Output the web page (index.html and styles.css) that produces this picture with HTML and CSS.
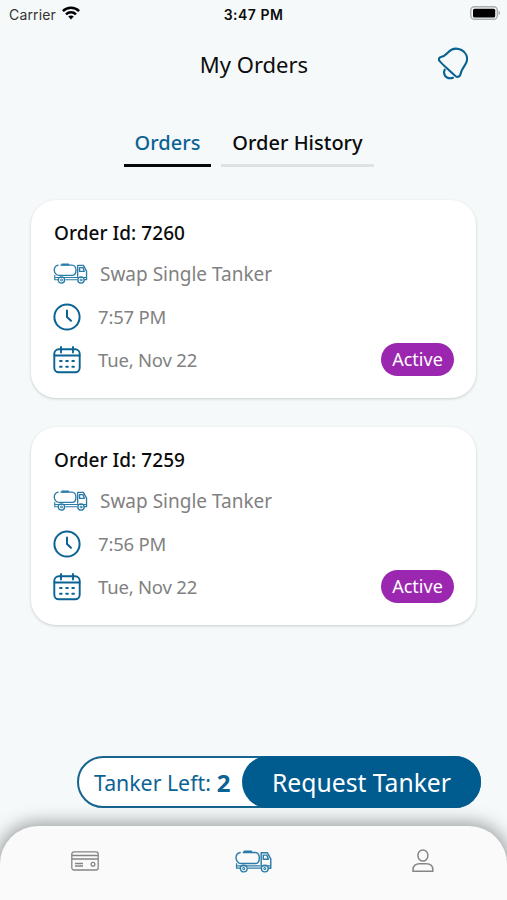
FILE: index.html
```html
<!DOCTYPE html>
<html lang="en">
<head>
<meta charset="utf-8">
<title>My Orders</title>
<link rel="stylesheet" href="styles.css">
</head>
<body>
<svg class="defs" width="0" height="0">
  <symbol id="truck" viewBox="0 0 36 22">
    <g fill="none" stroke="currentColor" stroke-width="1.4" stroke-linecap="round" stroke-linejoin="round">
      <path d="M5 2.300C2.200 3 1 4.800 1 7.300S2.800 13 6 13H19.500C22.300 13 23.700 10.500 23.700 7.500S22.500 2.300 19.500 2.300H8"/>
      <path d="M9 1H16V2H9Z" stroke-width="1.200"/>
      <path d="M25.500 14V2.500H31.500L34.800 8.500V17.500H32.500M27.500 4.800H31L32.500 8.800H27.500Z"/>
      <path d="M1.500 13V17.500H5M13 17.500H25M1.500 15.200H34.500" stroke-width="1.200"/>
      <circle cx="8.500" cy="17.800" r="3.300"/><circle cx="8.500" cy="17.800" r="1" stroke-width="1"/>
      <circle cx="29" cy="17.800" r="3.300"/><circle cx="29" cy="17.800" r="1" stroke-width="1"/>
    </g>
  </symbol>
  <symbol id="clock" viewBox="0 0 28 28">
    <g fill="none" stroke="currentColor" stroke-width="2" stroke-linecap="round" stroke-linejoin="round">
      <circle cx="14" cy="14" r="12.600"/><path d="M14 7.500V14L18 17.800"/>
    </g>
  </symbol>
  <symbol id="calendar" viewBox="0 0 28 28">
    <g fill="none" stroke="currentColor" stroke-width="1.900" stroke-linecap="round">
      <rect x="1.300" y="3.300" width="25.400" height="23" rx="4.500"/>
      <path d="M1.500 9.500H26.500M8 1V6.500M20 1V6.500"/>
      <path d="M7 15H8.700M13.200 15H14.900M19.300 15H21M7 20.800H8.700M13.200 20.800H14.900M19.300 20.800H21"/>
    </g>
  </symbol>
</svg>

<div class="status">
  <div class="carrier"><span>Carrier</span>
    <svg width="18" height="14" viewBox="0 0 18 14"><g fill="none" stroke="#000" stroke-width="2.500"><path d="M.9 5.200C5.400 .7 12.600 .7 17.100 5.200"/><path d="M4 8.300C6.800 5.600 11.200 5.600 14 8.300"/></g><path d="M6.200 10.500C7.800 9 10.200 9 11.800 10.500L9 13.400Z"/></svg>
  </div>
  <div class="time">3:47 PM</div>
  <svg class="battery" width="31" height="14" viewBox="0 0 31 14"><rect x=".8" y=".8" width="26.500" height="12.400" rx="3.500" fill="none" stroke="#aaadae" stroke-width="1.400"/><rect x="3" y="2.700" width="22.200" height="8.800" rx="1.500"/><path d="M28.500 4.800C30.500 5.500 30.500 8.500 28.500 9.200Z" fill="#aaadae"/></svg>
</div>

<header class="header">
  <h1>My Orders</h1>
  <svg class="bell" width="32" height="34" viewBox="0 0 32 34"><g fill="none" stroke="#066290" stroke-width="2.100" stroke-linecap="round" stroke-linejoin="round"><path d="M1.600 14C.2 12.300 .8 10.600 3 10C6.500 9.400 8 7.600 10.200 5.300C13.500 1.800 18.500 .6 23.500 3C28.200 5.500 30 10.300 28.500 15.200C27.300 18.500 23.800 21.500 22.700 26.500C22.200 29.600 20 30.500 17.800 29.300C16.500 28.500 3 16 1.600 14Z"/><path d="M6.700 22.700C5.300 25.500 6.300 29 9 30.500C11 31.600 13 31.500 15 30.800"/></g></svg>
</header>

<nav class="tabs">
  <div class="tab on"><span>Orders</span></div>
  <div class="tab"><span>Order History</span></div>
</nav>

<main class="list">
  <section class="card">
    <h2>Order Id: 7260</h2>
    <div class="row kind"><svg width="35" height="21"><use href="#truck"/></svg><span>Swap Single Tanker</span></div>
    <div class="row"><svg width="28" height="28"><use href="#clock"/></svg><span>7:57 PM</span></div>
    <div class="row"><svg width="28" height="28"><use href="#calendar"/></svg><span>Tue, Nov 22</span><b class="badge">Active</b></div>
  </section>
  <section class="card">
    <h2>Order Id: 7259</h2>
    <div class="row kind"><svg width="35" height="21"><use href="#truck"/></svg><span>Swap Single Tanker</span></div>
    <div class="row"><svg width="28" height="28"><use href="#clock"/></svg><span>7:56 PM</span></div>
    <div class="row"><svg width="28" height="28"><use href="#calendar"/></svg><span>Tue, Nov 22</span><b class="badge">Active</b></div>
  </section>
</main>

<div class="request">
  <div class="left"><span>Tanker Left:</span><b>2</b></div>
  <div class="button"><span>Request Tanker</span></div>
</div>

<footer class="bar">
  <div class="item"><svg width="28" height="20" viewBox="0 0 28 20"><g fill="none" stroke="#858585" stroke-width="1.300"><rect x=".8" y=".8" width="26.400" height="18.200" rx="2.200"/><path d="M1 4.500H27M1 8H27M4 12.500H12M4 15H12"/><circle cx="22" cy="13.300" r="1.900"/></g></svg></div>
  <div class="item truck"><svg width="37" height="23"><use href="#truck"/></svg></div>
  <div class="item"><svg width="22" height="24" viewBox="0 0 22 24"><g fill="none" stroke="#858585" stroke-width="1.500"><ellipse cx="10.900" cy="6.500" rx="5" ry="5.600"/><path d="M1 22.200V20.500C1 16.500 4 14.700 7.500 14.700H14.200C17.800 14.700 20.800 16.500 20.800 20.500V22.200Z"/></g></svg></div>
</footer>
</body>
</html>
```
FILE: styles.css
```css
* { box-sizing: border-box; }
body {
  margin: 0;
  height: 900px;
  display: flex;
  flex-direction: column;
  overflow: hidden;
  background: #f5f9fa;
  color: #0c0c0c;
  font-family: "Noto Sans", "Open Sans", sans-serif;
  white-space: nowrap;
}
svg { display: block; flex: none; }
.defs { position: absolute; }
.status {
  height: 28px;
  padding: 0 6px 0 9px;
  display: grid;
  grid-template-columns: 1fr auto 1fr;
  align-items: center;
  font-family: Inter, sans-serif;
  font-size: 14px;
}
.carrier { display: flex; gap: 6px; align-items: center; color: #333; }
.carrier span { letter-spacing: .15px; }
.carrier svg { margin-top: -2px; }
.time { font-weight: 600; letter-spacing: .5px; margin-right: 3px; }
.battery { justify-self: end; margin-top: -2px; }
.header {
  height: 71px;
  padding: 0 37px 0 70px;
  display: grid;
  grid-template-columns: 1fr 32px;
  align-items: center;
}
h1 { margin: 0; text-align: center; font-size: 22px; font-weight: 400; }
.tabs { display: flex; gap: 10px; margin: 20px 0 0 124px; height: 48px; }
.tab {
  width: 87px;
  height: 48px;
  padding-top: 2px;
  display: flex;
  justify-content: center;
  align-items: center;
  border-bottom: 3px solid #dee2e4;
  font-size: 20px;
  font-weight: 500;
}
.tab + .tab { width: 153px; }
.tab.on { color: #0b6394; border-color: #05080a; }
.list { padding: 33px 31px 0; display: grid; gap: 29px; }
.card {
  height: 198px;
  padding: 13px 22px 0;
  border-radius: 25px;
  background: #fff;
  box-shadow: 0 1px 3px rgba(0, 0, 0, .18);
}
h2 { margin: 0; padding-left: 1px; height: 39px; line-height: 40px; font-size: 19px; font-weight: 500; letter-spacing: .05px; }
.row {
  height: 43px;
  display: flex;
  align-items: center;
  gap: 17px;
  color: #818181;
  font-size: 18.500px;
  letter-spacing: -.2px;
}
.row svg { color: #0b6394; }
.row.kind { gap: 12px; font-size: 19px; letter-spacing: 0; }
.row.kind svg { color: #2b7ca8; }
.badge {
  margin-left: auto;
  width: 73px;
  height: 33px;
  border-radius: 17px;
  background: #9b27b0;
  color: #fff;
  font-size: 18px;
  font-weight: 400;
  letter-spacing: 0;
  line-height: 33px;
  text-align: center;
}
.request {
  margin: 131px 26px 0 77px;
  width: 404px;
  height: 52px;
  flex: none;
  display: flex;
  justify-content: space-between;
  border: 2px solid #16648f;
  border-radius: 26px;
  background: #fff;
}
.left { display: flex; align-items: center; gap: 6px; padding-left: 15px; color: #0b6394; font-size: 21.300px; }
.left b { font-size: 24px; }
.button {
  width: 239px;
  margin: -2px;
  border-radius: 26px;
  background: #005c8f;
  color: #fff;
  font-size: 24.700px;
  line-height: 53px;
  text-align: center;
}
.bar {
  margin-top: 18px;
  height: 74px;
  flex: none;
  padding: 0 0 4px;
  display: grid;
  grid-template-columns: repeat(3, 1fr);
  align-items: center;
  justify-items: center;
  border-radius: 38px 38px 0 0;
  background: #fafafa;
  box-shadow: 0 0 18px 3px rgba(0, 0, 0, .38);
}
.item.truck { color: #2b7ca8; }
```
